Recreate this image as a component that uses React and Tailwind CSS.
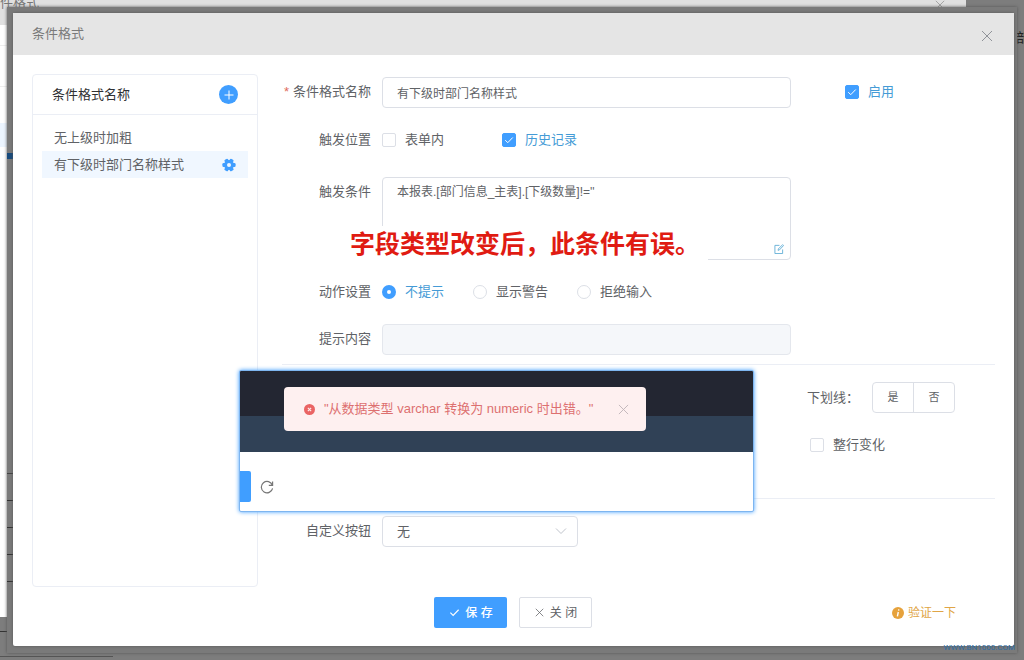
import { useState } from "react";

const rules = ["无上级时加粗", "有下级时部门名称样式"];
const actions = ["不提示", "显示警告", "拒绝输入"];

function Close({ className }) {
  return (
    <svg viewBox="0 0 12 12" className={className} fill="none" stroke="currentColor">
      <path d="M1 1l10 10M11 1L1 11" />
    </svg>
  );
}

function Check({ className }) {
  return (
    <svg viewBox="0 0 12 12" className={className} fill="none" stroke="currentColor" strokeWidth="1.2">
      <path d="M1.5 6.2l3 3 6-6.2" />
    </svg>
  );
}

function Gear() {
  return (
    <svg viewBox="0 0 14 14" className="size-[14px]" fill="#409eff">
      {[30, 90, 150, 210, 270, 330].map((a) => (
        <rect key={a} x="5" y="0.4" width="4" height="4" rx="1.2" transform={`rotate(${a} 7 7)`} />
      ))}
      <circle cx="7" cy="7" r="5" />
      <circle cx="7" cy="7" r="2" fill="#f0f7ff" />
    </svg>
  );
}

function CheckBox({ label, checked, onChange, className = "" }) {
  return (
    <label className={`flex items-center ${checked ? "text-[#459bd6]" : ""} ${className}`}>
      <span className="relative flex size-[14px] shrink-0">
        <input
          type="checkbox"
          checked={checked}
          onChange={onChange}
          className="size-[14px] appearance-none rounded-xs border border-[#dcdfe6] bg-white checked:border-[#409eff] checked:bg-[#409eff]"
        />
        {checked && <Check className="pointer-events-none absolute inset-0 m-auto size-[10px] text-white" />}
      </span>
      {label}
    </label>
  );
}

function Field({ label, htmlFor, required, className = "", children }) {
  return (
    <div className={`flex gap-[11px] ${className}`}>
      <label htmlFor={htmlFor} className="w-24 shrink-0 text-right leading-[30px]">
        {required && <span className="mr-1 text-[#e06c5c]">*</span>}
        {label}
      </label>
      {children}
    </div>
  );
}

// page and window that stay visible under the mask
function Behind() {
  return (
    <div aria-hidden="true" className="pointer-events-none absolute inset-0 overflow-hidden">
      <div className="absolute top-0 right-[58px] bottom-[43px] left-0 bg-white">
        <div className="h-[25px] bg-[#e0e0e0] text-[#777]">
          <span className="absolute -top-[5px] left-0 leading-4">件格式</span>
          <Close className="absolute top-0 right-[21px] size-[10px] text-[#999]" />
        </div>
        <div className="mt-5 h-px bg-[#eee]" />
        <div className="mt-10 h-px bg-[#eee]" />
        <div className="mt-9 h-6 w-2 bg-[#ecf5ff]" />
      </div>
      <div className="absolute bottom-[3px] left-0 h-px w-[113px] bg-[#555]" />
      <div className="absolute bottom-[28px] left-0 h-px w-2 bg-[#333]" />
      <span className="absolute top-[30px] left-[1016px] leading-4 text-[#222]">部</span>
    </div>
  );
}

function ErrorShot() {
  return (
    <div className="absolute top-[357px] left-[226px] h-[142px] w-[515px] overflow-hidden rounded-xs border border-[#7db5f0] bg-white shadow-[0_0_4px_#409eff]">
      <div className="h-[45px] bg-[#232632]" />
      <div className="h-9 bg-[#304156]" />
      <div className="mt-[19px] flex items-center gap-[9px]">
        <div className="h-[31px] w-[11px] rounded-r-xs bg-[#409eff]" />
        <button aria-label="刷新" className="text-[#777]">
          <svg viewBox="0 0 14 14" className="size-[14px]" fill="none" stroke="currentColor" strokeWidth="1.2">
            <path d="M12.4 5.2A5.7 5.7 0 1 0 12.6 8.4M12.6 1.4v4H8.8" />
          </svg>
        </button>
      </div>
      <div role="alert" className="absolute top-4 left-11 flex h-11 w-[362px] items-center rounded bg-[#fef0f0] pr-[17px] pl-5 text-[#dd7070]">
        <svg viewBox="0 0 12 12" className="mr-[9px] size-[11px]">
          <circle cx="6" cy="6" r="6" fill="#ea6464" />
          <path d="M4.2 4.2l3.6 3.6M7.8 4.2L4.2 7.8" stroke="#fef0f0" strokeWidth="1.2" />
        </svg>
        <span className="whitespace-nowrap">"从数据类型 varchar 转换为 numeric 时出错。"</span>
        <button aria-label="关闭提示" className="ml-auto text-[#c0b4b8]">
          <Close className="size-[11px]" />
        </button>
      </div>
    </div>
  );
}

export default function App() {
  const [name, setName] = useState("有下级时部门名称样式");
  const [condition, setCondition] = useState("本报表.[部门信息_主表].[下级数量]!=''");
  const [selected, setSelected] = useState(1);
  const [action, setAction] = useState("不提示");
  const [enabled, setEnabled] = useState(true);
  const [inForm, setInForm] = useState(false);
  const [history, setHistory] = useState(true);
  const [wholeRow, setWholeRow] = useState(false);

  return (
    <div className="relative min-h-screen bg-[#7d7d7d] p-[7px] font-['Liberation_Sans','Noto_Sans_CJK_SC',sans-serif] text-[13px] text-[#606266]">
      <Behind />
      <div className="relative bg-[#7a7a7a] p-[6px] pr-[3px] pb-[7px] shadow-[0_0_3px_#555]">
        <div aria-hidden="true" className="absolute top-[146px] left-0 h-[6px] w-[6px] bg-[#174a7c]" />
        <div aria-hidden="true" className="absolute top-[466px] left-0 flex w-[6px] flex-col gap-[26px]">
          <i className="h-px bg-[#444]" />
          <i className="h-px bg-[#333]" />
          <i className="h-px bg-[#333]" />
          <i className="h-px bg-[#333]" />
          <i className="h-px bg-[#333]" />
        </div>
        <div role="dialog" aria-label="条件格式" className="relative rounded-xs bg-white shadow-[0_0_3px_#555]">
          <header className="flex h-[42px] items-center justify-between bg-[#e5e5e5] pr-[21px] pl-[19px] text-[#7a7a7a]">
            <h1>条件格式</h1>
            <button aria-label="关闭窗口" className="mt-1 text-[#909399]">
              <Close className="size-3" />
            </button>
          </header>

          <main className="flex gap-6 pt-[19px] pr-[19px] pl-[19px]">
            <aside className="h-[513px] w-[226px] shrink-0 rounded border border-[#ebeef5]">
              <div className="flex h-10 items-center justify-between border-b border-[#ebeef5] pr-[19px] pl-[19px] text-[#303133]">
                <h2>条件格式名称</h2>
                <button aria-label="新增" className="flex size-[19px] items-center justify-center rounded-full bg-[#409eff] text-white">
                  <svg viewBox="0 0 12 12" className="size-3" stroke="currentColor">
                    <path d="M6 1.5v9M1.5 6h9" />
                  </svg>
                </button>
              </div>
              <ul className="px-[9px] pt-[9px]">
                {rules.map((rule, i) => (
                  <li key={rule} className={`flex h-[27px] items-center justify-between pr-3 pl-3 ${selected === i ? "bg-[#f0f7ff]" : ""}`}>
                    <button onClick={() => setSelected(i)}>{rule}</button>
                    {selected === i && (
                      <button aria-label="设置">
                        <Gear />
                      </button>
                    )}
                  </li>
                ))}
              </ul>
            </aside>

            <form className="min-w-0 flex-1" onSubmit={(e) => e.preventDefault()}>
              <div className="flex items-start pt-[3px]">
                <Field label="条件格式名称" htmlFor="name" required className="-ml-[7px] w-[516px]">
                  <input
                    id="name"
                    value={name}
                    onChange={(e) => setName(e.target.value)}
                    className="h-[31px] min-w-0 flex-1 rounded border border-[#dcdfe6] px-[14px] text-xs"
                  />
                </Field>
                <CheckBox label="启用" checked={enabled} onChange={() => setEnabled(!enabled)} className="ml-[54px] h-[30px] gap-[9px]" />
              </div>

              <Field label="触发位置" className="mt-[17px] -ml-[7px]">
                <CheckBox label="表单内" checked={inForm} onChange={() => setInForm(!inForm)} className="w-[109px] gap-[9px]" />
                <CheckBox label="历史记录" checked={history} onChange={() => setHistory(!history)} className="gap-[9px]" />
              </Field>

              <Field label="触发条件" htmlFor="condition" className="mt-[22px] -ml-[7px] w-[516px]">
                <div className="relative flex min-w-0 flex-1">
                  <textarea
                    id="condition"
                    value={condition}
                    onChange={(e) => setCondition(e.target.value)}
                    className="h-[83px] w-full resize-none rounded border border-[#dcdfe6] px-[14px] py-[5px] text-xs leading-[18px]"
                  />
                  <button aria-label="编辑条件" className="absolute right-[7px] bottom-[6px] text-[#62aed6]">
                    <svg viewBox="0 0 11 11" className="size-[10px]" fill="none" stroke="currentColor">
                      <path d="M6 1.5H1v9h8.5V6M4.5 7l.3-1.6L9.5.7l1 1L6 6.5z" />
                    </svg>
                  </button>
                  <p className="absolute top-[49px] -left-8 bg-white pr-2 text-[25px] leading-9 font-bold whitespace-nowrap text-[#e01b12]">
                    字段类型改变后，此条件有误。
                  </p>
                </div>
              </Field>

              <Field label="动作设置" className="mt-[17px] -ml-[7px]">
                <div className="flex items-center gap-[29px]">
                  {actions.map((item) => (
                    <label key={item} className={`flex items-center gap-[9px] ${action === item ? "text-[#459bd6]" : ""}`}>
                      <input
                        type="radio"
                        name="action"
                        checked={action === item}
                        onChange={() => setAction(item)}
                        className="size-[14px] appearance-none rounded-full border border-[#dcdfe6] bg-white checked:border-[5px] checked:border-[#409eff]"
                      />
                      {item}
                    </label>
                  ))}
                </div>
              </Field>

              <Field label="提示内容" htmlFor="tip" className="mt-[17px] -ml-[7px] w-[516px]">
                <input id="tip" disabled className="h-[31px] min-w-0 flex-1 rounded border border-[#e4e7ed] bg-[#f5f7fa]" />
              </Field>

              <div className="mt-[9px] flex h-[135px] flex-col items-end border-y border-[#ebeef5] pt-[17px]">
                <div className="flex w-[188px] items-center">
                  <span className="w-[65px]">下划线：</span>
                  <div className="flex h-[31px] rounded border border-[#dcdfe6] text-[11px]">
                    <button className="w-[41px] border-r border-[#dcdfe6]">是</button>
                    <button className="w-10">否</button>
                  </div>
                </div>
                <CheckBox label="整行变化" checked={wholeRow} onChange={() => setWholeRow(!wholeRow)} className="mt-[22px] w-[185px] gap-[9px]" />
              </div>

              <Field label="自定义按钮" htmlFor="custom" className="mt-[17px] -ml-[7px]">
                <div className="relative">
                  <select id="custom" className="h-[31px] w-[196px] appearance-none rounded border border-[#dcdfe6] bg-white px-[14px]">
                    <option>无</option>
                  </select>
                  <svg viewBox="0 0 12 12" className="pointer-events-none absolute top-[9px] right-[11px] size-3" fill="none" stroke="#c0c4cc">
                    <path d="M1 3.5l5 5 5-5" />
                  </svg>
                </div>
              </Field>
            </form>
          </main>

          <footer className="grid grid-cols-3 items-center pt-[10px] pb-[18px] text-xs">
            <div className="col-start-2 flex justify-center gap-3">
              <button className="flex h-[31px] w-[73px] items-center justify-center gap-[5px] rounded-xs bg-[#409eff] font-medium text-white">
                <Check className="size-[11px]" />
                保 存
              </button>
              <button className="flex h-[31px] w-[73px] items-center justify-center gap-[6px] rounded-xs border border-[#dcdfe6]">
                <Close className="size-[9px]" />
                关 闭
              </button>
            </div>
            <button className="mr-[58px] flex items-center gap-1 justify-self-end text-[#e0a546]">
              <svg viewBox="0 0 12 12" className="size-3">
                <circle cx="6" cy="6" r="6" fill="#e6a23c" />
                <path d="M6.8 2.4l-.2 1.2M6.3 5L5.4 9.4" stroke="#fff" strokeWidth="1.4" />
              </svg>
              验证一下
            </button>
          </footer>
          <ErrorShot />
        </div>
      </div>
      <a href="#top" className="absolute right-[9px] bottom-[6px] font-[Roboto,sans-serif] text-[8px] leading-3 text-[#2f6da3]">
        WWW.BN1000.COM
      </a>
    </div>
  );
}
